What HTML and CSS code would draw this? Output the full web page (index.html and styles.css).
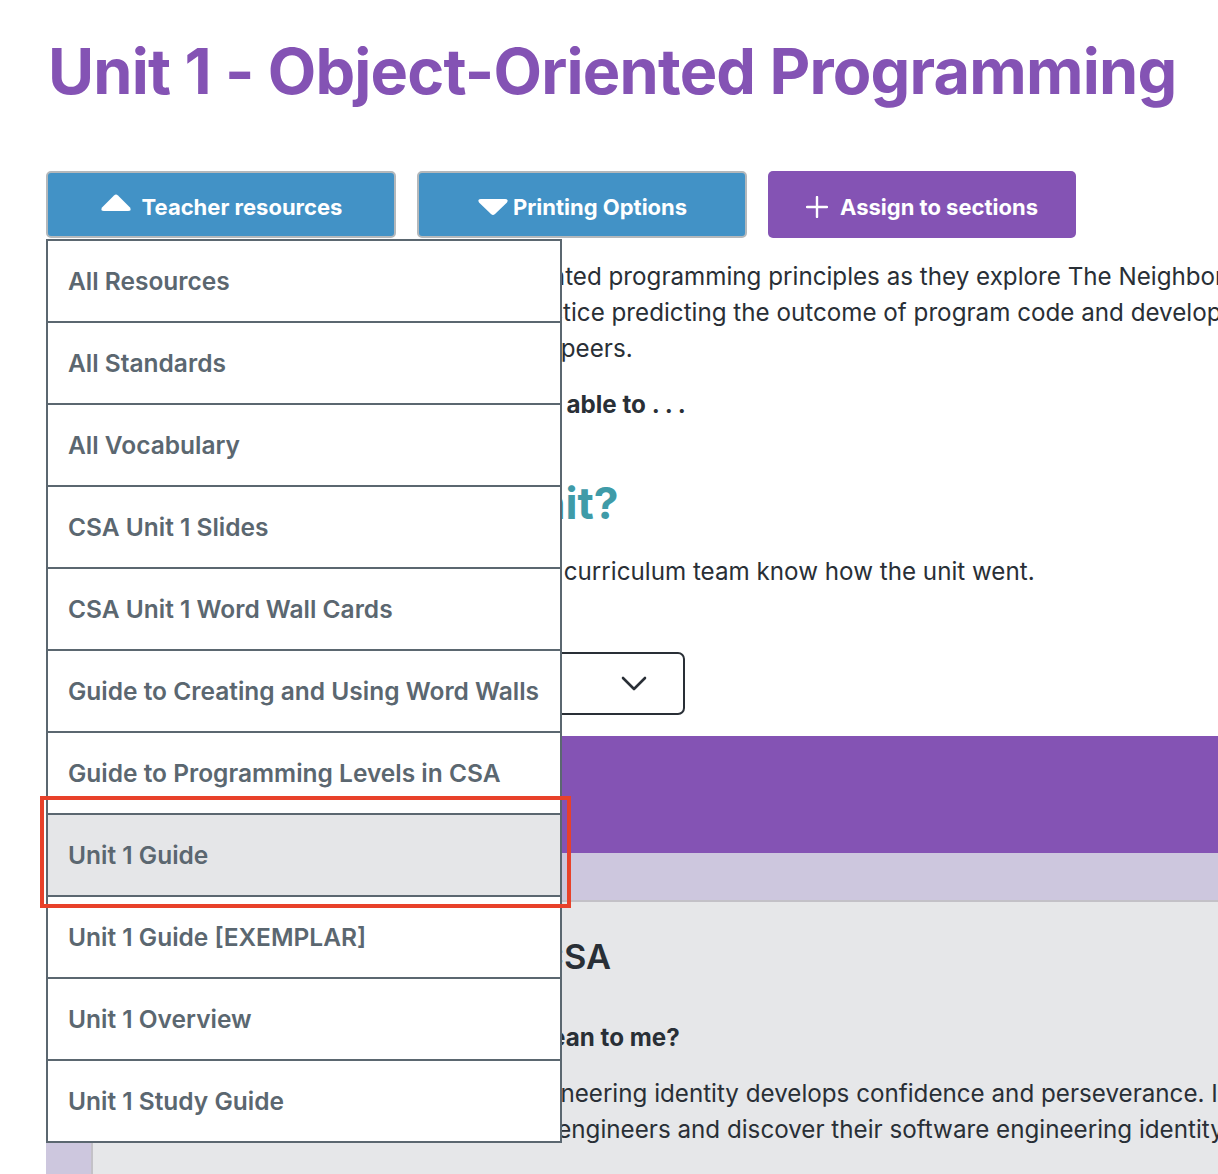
FILE: index.html
```html
<!DOCTYPE html>
<html lang="en">
  <head>
    <meta charset="UTF-8" />
    <meta name="viewport" content="width=device-width, initial-scale=1.0" />
    <title>Unit 1 - Object-Oriented Programming</title>

    <link rel="stylesheet" href="styles.css">
  </head>
  <body>
    <div class="page">
      <h1 class="unit-title">Unit 1 - Object-Oriented Programming</h1>

      <div class="actions">
        <div class="dropdown">
          <button class="btn btn-blue btn-teacher" type="button">
            <svg class="caret" width="32" height="20" viewBox="0 0 32 20">
              <path d="M14 2.5 Q16 0.5 18 2.5 L30 14.5 Q32 18 28 18 L4 18 Q0 18 2 14.5 Z" fill="#fff" />
            </svg>
            Teacher resources
          </button>
          <ul class="dropdown-menu">
            <li>All Resources</li>
            <li>All Standards</li>
            <li>All Vocabulary</li>
            <li>CSA Unit 1 Slides</li>
            <li>CSA Unit 1 Word Wall Cards</li>
            <li>Guide to Creating and Using Word Walls</li>
            <li>Guide to Programming Levels in CSA</li>
            <li class="active">Unit 1 Guide</li>
            <li>Unit 1 Guide [EXEMPLAR]</li>
            <li>Unit 1 Overview</li>
            <li>Unit 1 Study Guide</li>
          </ul>
        </div>

        <button class="btn btn-blue btn-print" type="button">
          <svg class="caret" width="32" height="18" viewBox="0 0 32 18">
            <path d="M4 1 L28 1 Q32 1 30 4.5 L18 16 Q16 18 14 16 L2 4.5 Q0 1 4 1 Z" fill="#fff" />
          </svg>
          Printing Options
        </button>

        <button class="btn btn-purple" type="button">
          <svg class="plus" width="22" height="22" viewBox="0 0 22 22">
            <path d="M11 1 V21 M1 11 H21" stroke="#fff" stroke-width="2.4" stroke-linecap="round" />
          </svg>
          Assign to sections
        </button>
      </div>

      <div class="unit-body">
        <p class="overview">
          In Unit 1 students are exposed to object-oriented programming principles as they explore The Neighborhood, a Java library<br>
          with graphic and visual output. Students practice predicting the outcome of program code and develop their own programs<br>
          and share their work and their ideas with the peers.
        </p>
        <p class="goal">By the end of this unit, your students will be able to . . .</p>

        <h2 class="feedback-title">How did you find this unit?</h2>
        <p class="feedback-text">Please, fill out this survey to let the Code.org curriculum team know how the unit went.</p>

        <div class="select-box">
          <span>Choose a section</span>
          <svg class="chevron" width="26" height="16" viewBox="0 0 26 16">
            <path d="M2 2 L13 13 L24 2" fill="none" stroke="#292f36" stroke-width="2.6" stroke-linecap="round" stroke-linejoin="round" />
          </svg>
        </div>

        <div class="lesson-banner">Lesson 1</div>

        <div class="lesson-panel">
          <div class="lesson-content">
            <h3>Software Engineering in CSA</h3>
            <p class="question">What does an engineer's identity mean to me?</p>
            <p>Having a clear, positive software engineering identity develops confidence and perseverance. In this unit, students</p>
            <p>start to view themselves as software engineers and discover their software engineering identity through reflection.</p>
          </div>
        </div>
      </div>

      <div class="highlight-box"></div>
    </div>
  </body>
</html>
```

FILE: styles.css
```css
html,
body {
  margin: 0;
  overflow: hidden;
}

body {
  background-color: #fff;
  font-family: Inter, "Noto Sans", sans-serif;
  color: #292f36;
}

.page {
  position: relative;
  width: 1500px;
  padding: 32px 0 0 46px;
}

.unit-title {
  margin: 0 0 60px 2px;
  font-size: 63px;
  line-height: 79px;
  font-weight: 700;
  color: #8453b4;
  letter-spacing: -0.8px;
}

.actions {
  display: flex;
  gap: 21px;
}

.dropdown {
  position: relative;
}

.btn {
  display: flex;
  align-items: center;
  justify-content: center;
  gap: 10px;
  height: 67px;
  padding: 4px 0 0 0;
  font-family: inherit;
  font-size: 22px;
  font-weight: 700;
  color: #fff;
  border-radius: 5px;
  cursor: pointer;
}

.btn-blue {
  background-color: #4292c6;
  border: 2px solid #b4b8bb;
}

.btn-teacher {
  width: 350px;
}

.btn-teacher .caret {
  margin-top: -8px;
}

.btn-print {
  width: 330px;
  gap: 4px;
}

.btn-purple {
  width: 308px;
  background-color: #8453b4;
  border: none;
  gap: 12px;
}

.dropdown-menu {
  position: absolute;
  top: 100%;
  left: 0;
  z-index: 2;
  width: 512px;
  margin: 1px 0 0 0;
  padding: 0;
  list-style: none;
  background-color: #fff;
  border: 2px solid #5b6770;
  border-bottom: none;
}

.dropdown-menu li {
  height: 80px;
  padding-left: 20px;
  display: flex;
  align-items: center;
  font-size: 24.5px;
  font-weight: 600;
  color: #5b6770;
  border-bottom: 2px solid #5b6770;
}

.dropdown-menu li.active {
  background-color: #e5e6e8;
}

.unit-body {
  padding-top: 21px;
  font-size: 24.2px;
  line-height: 36px;
}

.unit-body p {
  margin: 0;
}

.overview {
  margin-bottom: 20px !important;
}

.goal {
  font-weight: 700;
}

.feedback-title {
  margin: 52px 0 0 0;
  font-size: 44.3px;
  line-height: 56px;
  font-weight: 700;
  color: #3f9ba8;
}

.feedback-text {
  margin-top: 23px !important;
}

.select-box {
  width: 639px;
  height: 63px;
  margin-top: 62px;
  padding: 0 36px 0 20px;
  box-sizing: border-box;
  display: flex;
  align-items: center;
  justify-content: space-between;
  border: 2px solid #292f36;
  border-radius: 7px;
}

.lesson-banner {
  height: 117px;
  margin-top: 21px;
  padding-left: 40px;
  display: flex;
  align-items: center;
  background-color: #8453b4;
  color: #fff;
  font-size: 30px;
  font-weight: 700;
}

.lesson-panel {
  padding: 47px 0 0 45px;
  background-color: #cdc7de;
}

.lesson-content {
  min-height: 300px;
  padding: 30px 40px;
  background-color: #e6e7e9;
  border-top: 2px solid #c3c1c7;
  border-left: 2px solid #c3c1c7;
}

.lesson-content h3 {
  margin: 0 0 38px 0;
  font-size: 34.4px;
  line-height: 50px;
  font-weight: 600;
}

.lesson-content .question {
  margin-bottom: 20px;
  font-weight: 700;
}

.highlight-box {
  position: absolute;
  top: 796px;
  left: 40px;
  width: 523px;
  height: 104px;
  border: 4px solid #e8412a;
  z-index: 3;
}
```
